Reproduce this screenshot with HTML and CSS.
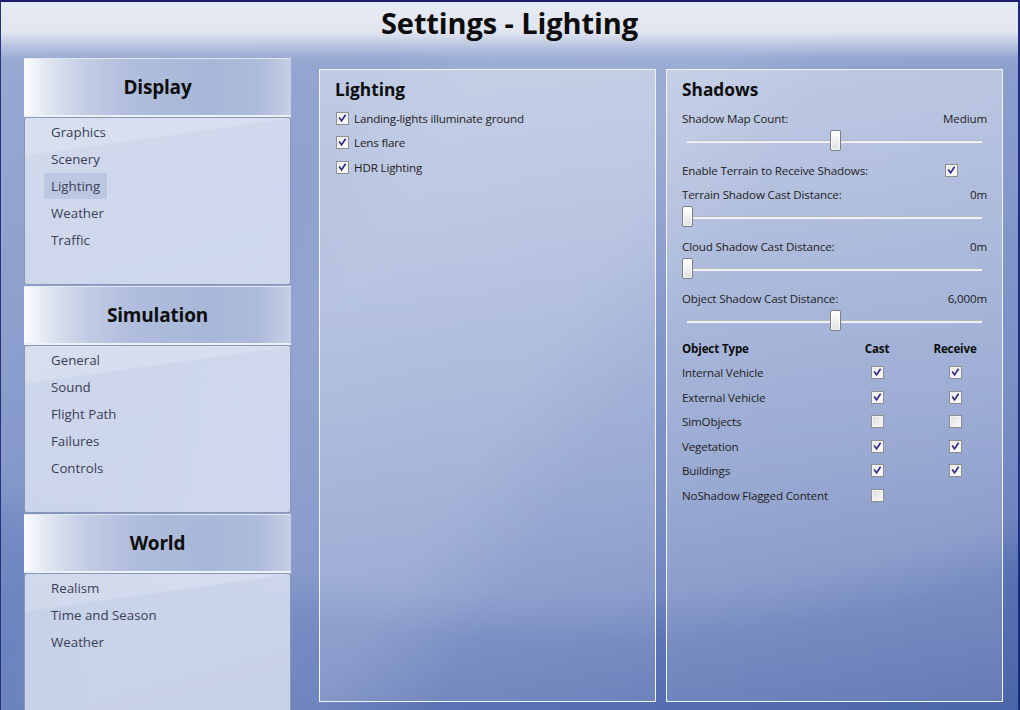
FILE: index.html
```html
<!DOCTYPE html>
<html lang="en">
<head>
<meta charset="utf-8">
<title>Settings - Lighting</title>
<link rel="stylesheet" href="styles.css">
</head>
<body>
<div class="window">
  <header class="titlebar">
    <h1>Settings - Lighting</h1>
  </header>

  <div class="content">
    <nav class="sidebar">
      <section class="group">
        <h2 class="group-head">Display</h2>
        <ul class="group-list">
          <li><span class="nav-item">Graphics</span></li>
          <li><span class="nav-item">Scenery</span></li>
          <li><span class="nav-item active">Lighting</span></li>
          <li><span class="nav-item">Weather</span></li>
          <li><span class="nav-item">Traffic</span></li>
        </ul>
      </section>
      <section class="group">
        <h2 class="group-head">Simulation</h2>
        <ul class="group-list">
          <li><span class="nav-item">General</span></li>
          <li><span class="nav-item">Sound</span></li>
          <li><span class="nav-item">Flight Path</span></li>
          <li><span class="nav-item">Failures</span></li>
          <li><span class="nav-item">Controls</span></li>
        </ul>
      </section>
      <section class="group">
        <h2 class="group-head">World</h2>
        <ul class="group-list">
          <li><span class="nav-item">Realism</span></li>
          <li><span class="nav-item">Time and Season</span></li>
          <li><span class="nav-item">Weather</span></li>
        </ul>
      </section>
    </nav>

    <section class="panel">
      <h3 class="panel-title">Lighting</h3>
      <div class="check-row">
        <span class="cb checked"><svg viewBox="0 0 13 13"><path d="M3.2 6.2 L5.4 9.3 L9.6 3"/></svg></span>
        <span>Landing-lights illuminate ground</span>
      </div>
      <div class="check-row">
        <span class="cb checked"><svg viewBox="0 0 13 13"><path d="M3.2 6.2 L5.4 9.3 L9.6 3"/></svg></span>
        <span>Lens flare</span>
      </div>
      <div class="check-row">
        <span class="cb checked"><svg viewBox="0 0 13 13"><path d="M3.2 6.2 L5.4 9.3 L9.6 3"/></svg></span>
        <span>HDR Lighting</span>
      </div>
    </section>

    <section class="panel">
      <h3 class="panel-title">Shadows</h3>

      <div class="field"><span>Shadow Map Count:</span><span>Medium</span></div>
      <div class="slider"><div class="track"></div><div class="thumb" style="left: 50%"></div></div>

      <div class="field">
        <span>Enable Terrain to Receive Shadows:</span>
        <span class="cb checked field-cb"><svg viewBox="0 0 13 13"><path d="M3.2 6.2 L5.4 9.3 L9.6 3"/></svg></span>
      </div>

      <div class="field"><span>Terrain Shadow Cast Distance:</span><span>0m</span></div>
      <div class="slider"><div class="track"></div><div class="thumb" style="left: 0%"></div></div>

      <div class="field"><span>Cloud Shadow Cast Distance:</span><span>0m</span></div>
      <div class="slider"><div class="track"></div><div class="thumb" style="left: 0%"></div></div>

      <div class="field"><span>Object Shadow Cast Distance:</span><span>6,000m</span></div>
      <div class="slider"><div class="track"></div><div class="thumb" style="left: 50%"></div></div>

      <div class="obj-table">
        <div class="th">Object Type</div><div class="th c">Cast</div><div class="th c">Receive</div>

        <div class="td">Internal Vehicle</div>
        <div class="td c"><span class="cb checked"><svg viewBox="0 0 13 13"><path d="M3.2 6.2 L5.4 9.3 L9.6 3"/></svg></span></div>
        <div class="td c"><span class="cb checked"><svg viewBox="0 0 13 13"><path d="M3.2 6.2 L5.4 9.3 L9.6 3"/></svg></span></div>

        <div class="td">External Vehicle</div>
        <div class="td c"><span class="cb checked"><svg viewBox="0 0 13 13"><path d="M3.2 6.2 L5.4 9.3 L9.6 3"/></svg></span></div>
        <div class="td c"><span class="cb checked"><svg viewBox="0 0 13 13"><path d="M3.2 6.2 L5.4 9.3 L9.6 3"/></svg></span></div>

        <div class="td">SimObjects</div>
        <div class="td c"><span class="cb"></span></div>
        <div class="td c"><span class="cb"></span></div>

        <div class="td">Vegetation</div>
        <div class="td c"><span class="cb checked"><svg viewBox="0 0 13 13"><path d="M3.2 6.2 L5.4 9.3 L9.6 3"/></svg></span></div>
        <div class="td c"><span class="cb checked"><svg viewBox="0 0 13 13"><path d="M3.2 6.2 L5.4 9.3 L9.6 3"/></svg></span></div>

        <div class="td">Buildings</div>
        <div class="td c"><span class="cb checked"><svg viewBox="0 0 13 13"><path d="M3.2 6.2 L5.4 9.3 L9.6 3"/></svg></span></div>
        <div class="td c"><span class="cb checked"><svg viewBox="0 0 13 13"><path d="M3.2 6.2 L5.4 9.3 L9.6 3"/></svg></span></div>

        <div class="td">NoShadow Flagged Content</div>
        <div class="td c"><span class="cb"></span></div>
        <div class="td c"></div>
      </div>
    </section>
  </div>
</div>
</body>
</html>
```

FILE: styles.css
```css
html, body {
  margin: 0;
  padding: 0;
}

body {
  width: 1020px;
  height: 710px;
  overflow: hidden;
  font-family: "Open Sans", "Noto Sans", "Liberation Sans", sans-serif;
  color: #1c1c1c;
}

/* Window frame with the glassy blue backdrop */
.window {
  box-sizing: border-box;
  width: 1020px;
  height: 710px;
  overflow: hidden;
  border-top: 2px solid #1c1d6c;
  border-left: 1px solid #27337f;
  border-right: 2px solid #1e2b7e;
  background:
    linear-gradient(180deg,
      rgba(231, 235, 244, 1) 0px,
      rgba(225, 229, 240, 1) 30px,
      rgba(192, 202, 227, 0.75) 45px,
      rgba(160, 176, 214, 0.25) 57px,
      rgba(160, 176, 214, 0) 70px),
    radial-gradient(ellipse 980px 600px at 560px 40px,
      rgba(255, 255, 255, 0.10) 0%,
      rgba(255, 255, 255, 0.10) 92%,
      rgba(255, 255, 255, 0) 100%),
    linear-gradient(122deg,
      rgba(255, 255, 255, 0) 28%,
      rgba(255, 255, 255, 0.10) 36%,
      rgba(255, 255, 255, 0.10) 52%,
      rgba(255, 255, 255, 0) 60%),
    linear-gradient(165deg, #8ea1ce 0%, #7d93c7 38%, #6a82be 68%, #4b65aa 100%);
}

/* Title */
.titlebar {
  height: 56px;
  display: flex;
  justify-content: center;
}

.titlebar h1 {
  margin: 0;
  font-size: 29px;
  line-height: 42px;
  font-weight: 700;
  color: #0c0c0c;
  letter-spacing: -0.1px;
}

/* Main area */
.content {
  display: flex;
  align-items: flex-start;
  padding-left: 23px;
}

/* Left navigation column */
.sidebar {
  width: 267px;
  margin-right: 28px;
  display: flex;
  flex-direction: column;
  gap: 1px;
}

.group-head {
  box-sizing: border-box;
  height: 59px;
  margin: 0;
  display: flex;
  align-items: center;
  justify-content: center;
  font-size: 19px;
  font-weight: 700;
  letter-spacing: -0.2px;
  color: #0d0d0d;
  border-top: 1px solid #e3e8f3;
  border-bottom: 2px solid #eef1f8;
  background:
    linear-gradient(90deg,
      #fbfcfe 0%,
      #e0e6f1 9%,
      #c4cee5 22%,
      #b0bddc 40%,
      #a8b7d8 70%,
      #aebbda 88%,
      #c6cfe5 100%);
}

.group-list {
  box-sizing: border-box;
  height: 168px;
  margin: 0;
  padding: 0;
  list-style: none;
  border: 1px solid #8a96b6;
  border-radius: 3px;
  background:
    linear-gradient(172deg,
      rgba(255, 255, 255, 0.18) 0%,
      rgba(255, 255, 255, 0.18) 18%,
      rgba(255, 255, 255, 0) 19%),
    rgba(230, 235, 246, 0.74);
}

.group-list li {
  height: 27px;
  display: flex;
  align-items: center;
}

.nav-item {
  margin-left: 19px;
  padding: 0 7px;
  height: 26px;
  display: flex;
  align-items: center;
  font-size: 13.3px;
  color: #3a3e57;
}

.nav-item.active {
  background: rgba(140, 156, 196, 0.28);
}

/* Content panels */
.panel {
  box-sizing: border-box;
  width: 337px;
  height: 633px;
  margin-top: 11px;
  margin-right: 10px;
  padding: 8px 15px 0;
  border: 1px solid #f2f4fa;
  background:
    linear-gradient(175deg,
      rgba(255, 255, 255, 0.42) 0%,
      rgba(255, 255, 255, 0.30) 40%,
      rgba(255, 255, 255, 0.14) 100%);
}

.panel-title {
  margin: 0 0 4px;
  font-size: 17.3px;
  line-height: 24px;
  font-weight: 700;
  color: #0d0d0d;
}

.check-row {
  height: 24.5px;
  display: flex;
  align-items: center;
  gap: 5px;
  padding-left: 1px;
  font-size: 11.6px;
  letter-spacing: -0.15px;
  color: #1e1e1e;
}

/* Checkbox */
.cb {
  box-sizing: border-box;
  width: 13px;
  height: 13px;
  flex: none;
  display: inline-block;
  border: 1px solid #8e8f8f;
  box-shadow: inset 0 0 0 1px #f3f3f3;
  background: linear-gradient(135deg, #d9d9d9 0%, #eeeeee 55%, #fbfbfb 100%);
}

.cb.checked {
  background: linear-gradient(135deg, #e6e6e6 0%, #f6f6f6 60%, #ffffff 100%);
}

.cb svg {
  display: block;
  width: 11px;
  height: 11px;
  margin: 0;
}

.cb path {
  fill: none;
  stroke: #2b2c82;
  stroke-width: 2;
  stroke-linecap: square;
  stroke-linejoin: miter;
}

/* Labelled fields in the shadows panel */
.field {
  height: 24px;
  display: flex;
  align-items: center;
  justify-content: space-between;
  font-size: 11.6px;
  letter-spacing: -0.15px;
  color: #1e1e1e;
}

.field-cb {
  margin-right: 29px;
}

.slider {
  position: relative;
  height: 24px;
  margin: 0 5px 4px;
}

.slider .track {
  position: absolute;
  left: 0;
  right: 0;
  top: 10px;
  height: 1px;
  background: #e9eaee;
  border-top: 1px solid #b9bcc6;
  border-bottom: 1px solid #f7f8fb;
}

.slider .thumb {
  position: absolute;
  top: 0;
  box-sizing: border-box;
  width: 11px;
  height: 21px;
  margin-left: -5px;
  border: 1px solid #7b7e86;
  border-radius: 2px;
  background: linear-gradient(180deg, #ffffff 0%, #f3f3f3 45%, #dedede 100%);
  box-shadow: inset 0 0 0 1px rgba(255, 255, 255, 0.7);
}

/* Object type table */
.obj-table {
  display: grid;
  grid-template-columns: 1fr 78px 78px;
  grid-auto-rows: 24.5px;
  margin-top: -2px;
  margin-right: -7px;
  font-size: 11.6px;
  letter-spacing: -0.15px;
  color: #1e1e1e;
}

.obj-table .th,
.obj-table .td {
  display: flex;
  align-items: center;
}

.obj-table .th {
  font-weight: 700;
  color: #0d0d0d;
}

.obj-table .c {
  justify-content: center;
}
```
